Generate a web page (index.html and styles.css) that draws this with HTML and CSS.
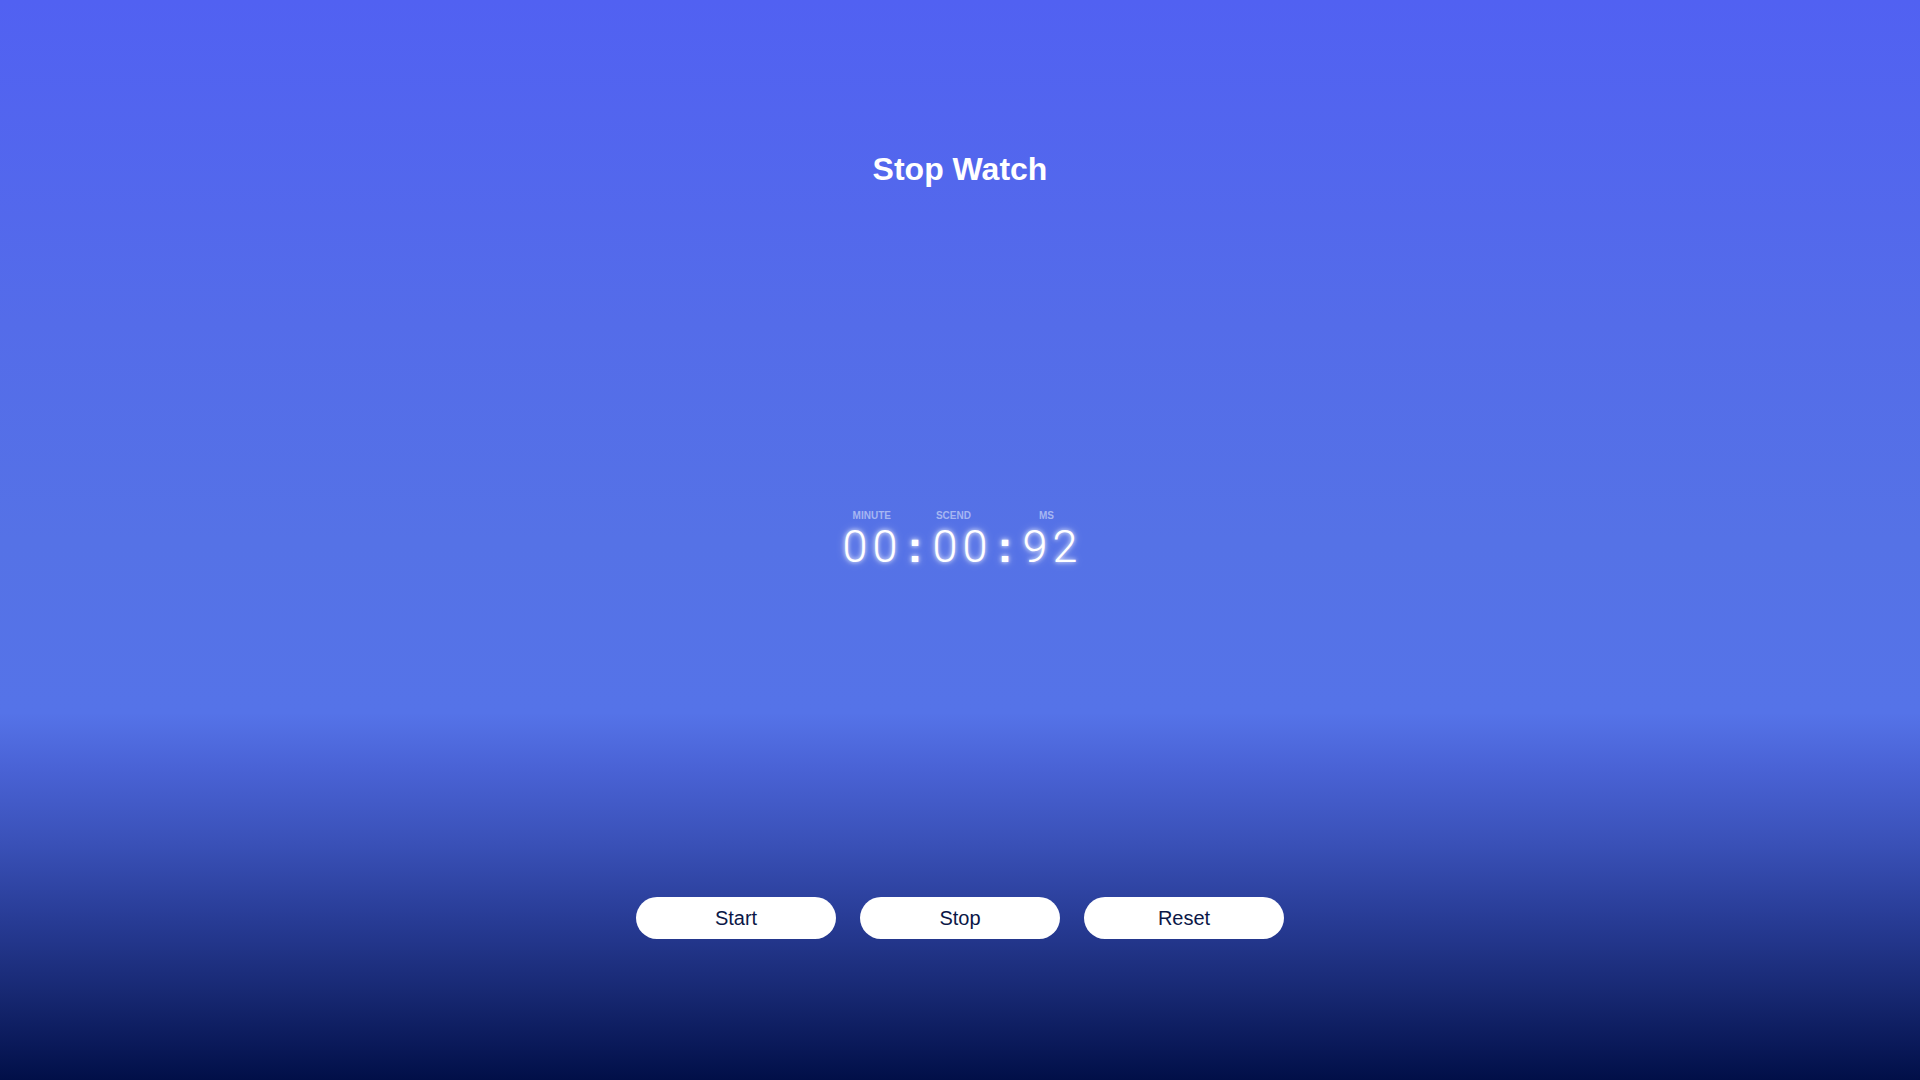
FILE: index.html
```html
<!DOCTYPE html>
<html lang="en">
<head>
<meta charset="UTF-8">
<title>Stop Watch</title>
<link rel="stylesheet" href="styles.css">
</head>
<body>
<div class="page">
  <h1 class="title">Stop Watch</h1>
  <main class="stage">
    <div class="clock">
      <div class="labels">
        <span class="label label-min">MINUTE</span>
        <span class="label label-sec">SCEND</span>
        <span class="label label-ms">MS</span>
      </div>
      <div class="readout">
        <span class="digits">00</span>
        <span class="colon">:</span>
        <span class="digits">00</span>
        <span class="colon">:</span>
        <span class="digits">92</span>
      </div>
    </div>
  </main>
  <div class="controls">
    <button class="btn">Start</button>
    <button class="btn">Stop</button>
    <button class="btn">Reset</button>
  </div>
</div>
</body>
</html>
```

FILE: styles.css
```css
html, body {
  margin: 0;
  padding: 0;
  height: 100%;
}

body {
  font-family: "Liberation Sans", Arial, sans-serif;
  background: linear-gradient(180deg,
    #5161f2 0%,
    #546ce9 30%,
    #5572e6 50%,
    #5573e8 66%,
    #4a63d6 71%,
    #3a51b8 78%,
    #283c96 85%,
    #172872 92%,
    #010f48 100%);
  color: #fff;
  overflow: hidden;
}

.page {
  height: 100vh;
  display: flex;
  flex-direction: column;
  align-items: center;
}

.title {
  margin: 151px 0 0;
  font-size: 32px;
  line-height: 37px;
  font-weight: bold;
  color: #fff;
}

.stage {
  flex: 1;
  display: flex;
  align-items: center;
  justify-content: center;
  padding-bottom: 7px;
}

.clock {
  display: flex;
  flex-direction: column;
}

.labels {
  display: flex;
  margin-bottom: 2px;
}

.label {
  font-size: 10px;
  line-height: 12px;
  font-weight: bold;
  color: #a6b6f2;
}

.label-min { margin-left: 10px; }
.label-sec { margin-left: 45px; }
.label-ms { margin-left: 68px; }

.readout {
  display: flex;
  align-items: flex-end;
}

.digits {
  font-family: Roboto, "Noto Sans", sans-serif;
  font-weight: 300;
  font-size: 45px;
  line-height: 45px;
  letter-spacing: 5px;
  margin-right: -5px;
  color: #fff;
  text-shadow: 0 0 4px rgba(255,255,255,0.9), 0 0 8px rgba(255,255,255,0.5);
}

.colon {
  font-family: "Liberation Sans", Arial, sans-serif;
  font-weight: bold;
  font-size: 45px;
  line-height: 45px;
  margin: 0 10px;
  color: #fff;
  text-shadow: 0 0 4px rgba(255,255,255,0.9), 0 0 8px rgba(255,255,255,0.5);
}

.controls {
  display: flex;
  gap: 24px;
  margin-bottom: 141px;
}

.btn {
  width: 200px;
  height: 42px;
  border: none;
  border-radius: 21px;
  background: #fff;
  color: #0b1747;
  font-family: "Liberation Sans", Arial, sans-serif;
  font-size: 20px;
  padding: 0;
  cursor: pointer;
}
```
